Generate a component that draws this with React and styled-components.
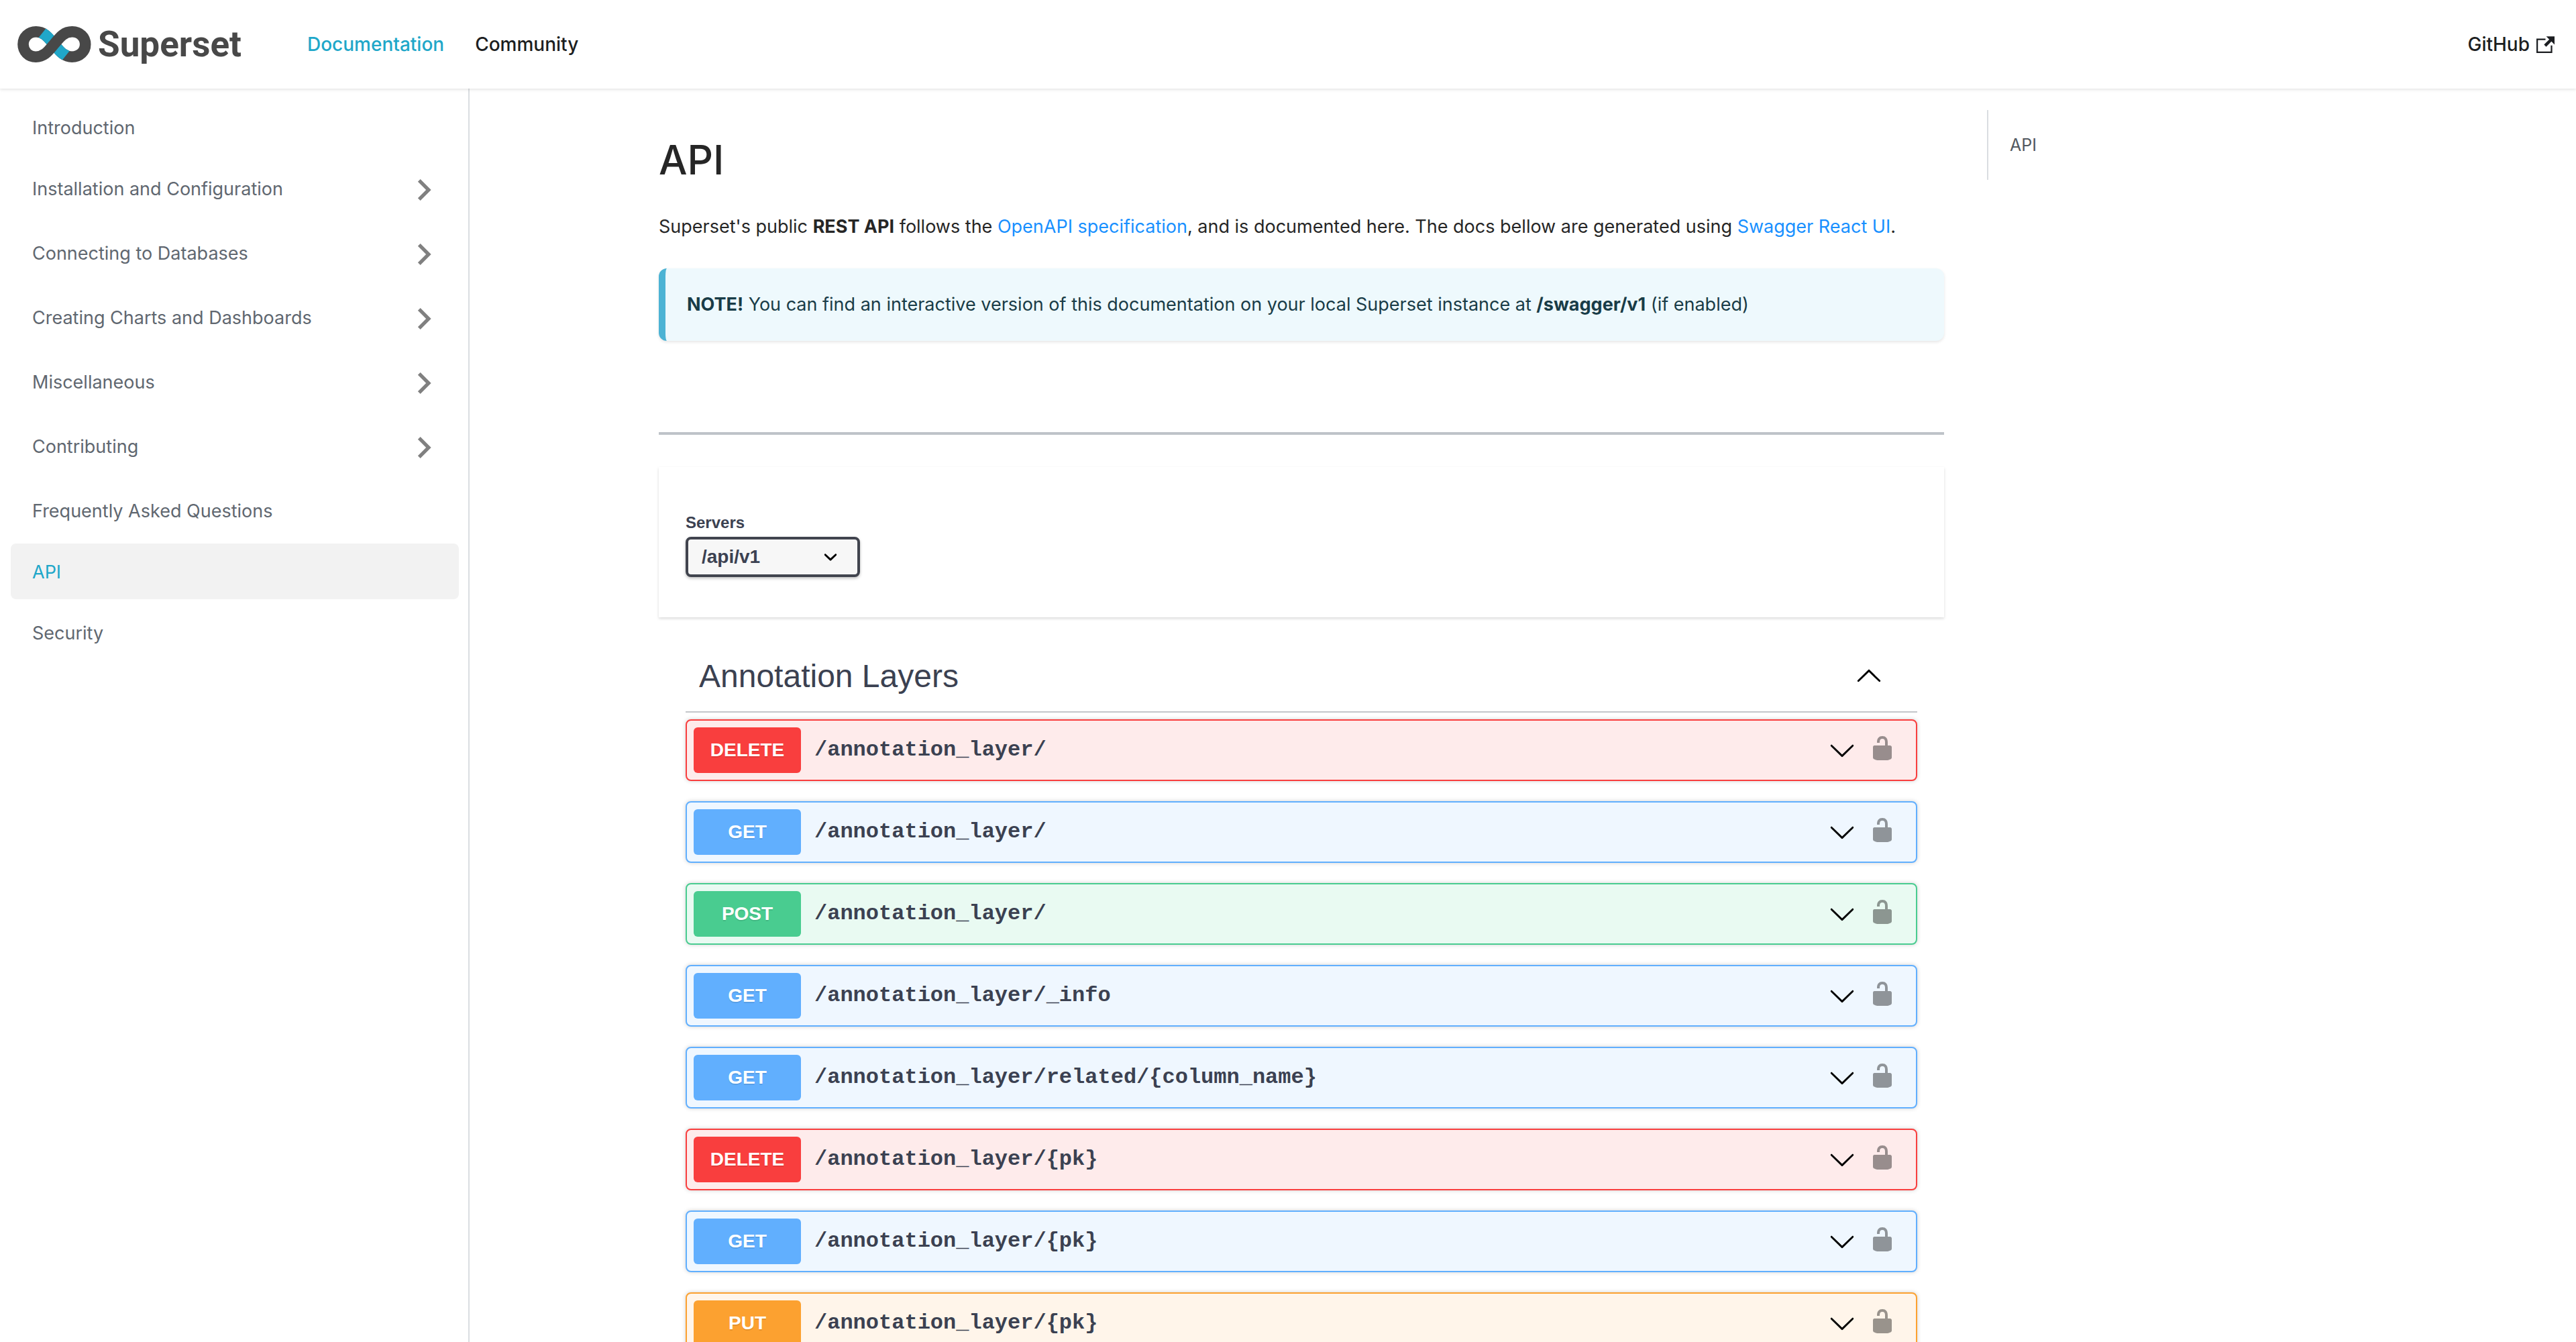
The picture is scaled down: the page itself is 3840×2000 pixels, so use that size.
import React, { useState } from "react";
import styled, { createGlobalStyle } from "styled-components";

const colors = {
  primary: "#20a7c9",
  ink: "#1c1e21",
  muted: "#606770",
  line: "#dadde1",
  swagger: "#3b4151",
};

const swaggerFont = `"Liberation Sans", Arial, sans-serif`;

const methods = {
  DELETE: { solid: "#f93e3e", tint: "#feebeb" },
  GET: { solid: "#61affe", tint: "#eff7ff" },
  POST: { solid: "#49cc90", tint: "#e9faf2" },
  PUT: { solid: "#fca130", tint: "#fff5ea" },
};

const sidebarItems = [
  { label: "Introduction" },
  { label: "Installation and Configuration", category: true },
  { label: "Connecting to Databases", category: true },
  { label: "Creating Charts and Dashboards", category: true },
  { label: "Miscellaneous", category: true },
  { label: "Contributing", category: true },
  { label: "Frequently Asked Questions" },
  { label: "API", active: true },
  { label: "Security" },
];

const operations = [
  { method: "DELETE", path: "/annotation_layer/" },
  { method: "GET", path: "/annotation_layer/" },
  { method: "POST", path: "/annotation_layer/" },
  { method: "GET", path: "/annotation_layer/_info" },
  { method: "GET", path: "/annotation_layer/related/{column_name}" },
  { method: "DELETE", path: "/annotation_layer/{pk}" },
  { method: "GET", path: "/annotation_layer/{pk}" },
  { method: "PUT", path: "/annotation_layer/{pk}" },
];

const GlobalStyle = createGlobalStyle`
  *, *::before, *::after { box-sizing: border-box; }
  body {
    margin: 0;
    background: #fff;
    color: #262626;
    font-family: Inter, "Liberation Sans", sans-serif;
    font-size: 27px;
  }
  a { color: inherit; text-decoration: none; }
  button { font: inherit; color: inherit; background: none; border: 0; padding: 0; cursor: pointer; }
  svg { display: block; flex: none; }
`;

const Shell = styled.div`
  display: flex;
  flex-direction: column;
  height: 100vh;
`;

const Navbar = styled.header`
  display: flex;
  align-items: center;
  flex: none;
  height: 132px;
  padding: 0 32px 0 26px;
  background: #fff;
  box-shadow: 0 2px 4px rgba(0, 0, 0, 0.1);
  position: relative;
  z-index: 1;
  color: ${colors.ink};
  font-size: 28px;
  font-weight: 500;
`;

const Brand = styled.a`
  display: flex;
  align-items: center;
  gap: 10px;
  margin-right: 98px;
  color: #484848;
  font: 700 53px/60px Roboto, sans-serif;
`;

const NavLinks = styled.nav`
  display: flex;
  flex: 1;
  gap: 46px;
`;

const NavLink = styled.a`
  display: flex;
  align-items: center;
  gap: 10px;
  line-height: 36px;
  color: ${(p) => (p.$active ? colors.primary : "inherit")};
`;

const Body = styled.div`
  display: flex;
  flex: 1;
  min-height: 0;
`;

const Sidebar = styled.nav`
  flex: none;
  width: 700px;
  padding: 16px 14px 16px 16px;
  border-right: 2px solid ${colors.line};
`;

const Menu = styled.ul`
  display: flex;
  flex-direction: column;
  gap: 8px;
  margin: 0;
  padding: 0;
  list-style: none;
`;

const MenuRow = styled.li`
  display: flex;
  border-radius: 8px;
  background: ${(p) => (p.$active ? "#f2f2f2" : "transparent")};
  color: ${(p) => (p.$active ? colors.primary : colors.muted)};
`;

const MenuLink = styled.a`
  flex: 1;
  padding: 25px 32px 23px;
  line-height: 35px;
`;

const MenuToggle = styled.button`
  display: flex;
  align-items: center;
  justify-content: center;
  width: 104px;
  height: 88px;
  color: #808080;
`;

const Content = styled.main`
  flex: 1;
  overflow: auto;
  scrollbar-width: none;
`;

const Columns = styled.div`
  display: grid;
  grid-template-columns: minmax(0, 3fr) minmax(0, 1fr);
  max-width: 2640px;
  margin: 0 auto;
  padding-top: 32px;
`;

const Article = styled.article`
  padding: 0 32px 32px;
`;

const Title = styled.h1`
  margin: 32px 0 34px;
  font-size: 60px;
  font-weight: 500;
  line-height: 84px;
`;

const Text = styled.p`
  margin: 0;
  line-height: 48px;
`;

const Intro = styled(Text)`
  margin-bottom: 38px;
`;

const TextLink = styled.a`
  color: #1890ff;
`;

const Note = styled.aside`
  padding: 30px 32px;
  border-left: 10px solid #4cb3d4;
  border-radius: 12px;
  background: #eef9fd;
  color: #193c47;
  box-shadow: 0 2px 4px rgba(0, 0, 0, 0.1);
`;

const Divider = styled.hr`
  height: 4px;
  margin: 136px 0 48px;
  border: 0;
  background: #bec3c9;
`;

const ServerPanel = styled.section`
  display: flex;
  flex-direction: column;
  align-items: flex-start;
  gap: 6px;
  padding: 68px 40px 60px;
  box-shadow: 0 2px 4px rgba(0, 0, 0, 0.15);
  color: ${colors.swagger};
  font-family: ${swaggerFont};
  font-weight: 700;
`;

const ServerLabel = styled.label`
  font-size: 24px;
  line-height: 30px;
`;

const SelectBox = styled.div`
  display: grid;
  align-items: center;

  > * {
    grid-area: 1 / 1;
  }

  > svg {
    justify-self: end;
    margin-right: 24px;
    pointer-events: none;
  }
`;

const Select = styled.select`
  appearance: none;
  width: 260px;
  height: 60px;
  padding: 0 80px 0 20px;
  border: 4px solid #41444e;
  border-radius: 8px;
  background: #f7f7f7;
  box-shadow: 0 2px 4px rgba(0, 0, 0, 0.25);
  color: inherit;
  font: 700 28px/32px ${swaggerFont};
`;

const TagSection = styled.section`
  padding: 36px 40px 0;
  color: ${colors.swagger};
`;

const TagHeader = styled.div`
  display: flex;
  align-items: center;
  justify-content: space-between;
  height: 106px;
  padding: 0 52px 0 20px;
  border-bottom: 2px solid rgba(59, 65, 81, 0.3);
`;

const TagTitle = styled.h3`
  margin: 0;
  font: 400 48px/56px ${swaggerFont};
`;

const LockButton = styled.button`
  padding-bottom: 6px;
  color: rgba(0, 0, 0, 0.4);
`;

const Operations = styled.div`
  display: flex;
  flex-direction: column;
  gap: 30px;
  padding-top: 10px;
`;

const Operation = styled.div`
  display: flex;
  align-items: center;
  gap: 20px;
  padding: 10px 30px 10px 10px;
  border: 2px solid ${(p) => methods[p.$method].solid};
  border-radius: 8px;
  background: ${(p) => methods[p.$method].tint};
  box-shadow: 0 0 6px rgba(0, 0, 0, 0.19);
`;

const OperationToggle = styled.button`
  display: flex;
  align-items: center;
  flex: 1;
  gap: 20px;
`;

const Method = styled.span`
  width: 160px;
  border-radius: 6px;
  background: ${(p) => methods[p.$method].solid};
  color: #fff;
  font: 700 28px/68px ${swaggerFont};
  text-align: center;
  text-shadow: 0 2px 0 rgba(0, 0, 0, 0.1);
`;

const Path = styled.span`
  flex: 1;
  font: 700 32px/40px "Liberation Mono", monospace;
  text-align: left;
`;

const Toc = styled.aside`
  padding: 0 32px;
`;

const TocList = styled.ul`
  margin: 0;
  padding: 32px;
  border-left: 2px solid ${colors.line};
  color: #525860;
  font-size: 25px;
  line-height: 40px;
  list-style: none;
`;

const LogoMark = () => (
  <svg width="110" height="54" viewBox="0 0 110 54" fill="none" strokeWidth="16.6" aria-hidden="true">
    <defs>
      <clipPath id="band">
        <path d="M45.2 0L26 24L40 54H64L83.2 30L69 0Z" />
      </clipPath>
    </defs>
    <path stroke="#484848" d="M27.5 8.3C40.5 8.3 46.5 17.5 54.5 27S68.5 45.7 81.5 45.7" />
    <path stroke="#20a7c9" clipPath="url(#band)" d="M27.5 8.3C40.5 8.3 46.5 17.5 54.5 27S68.5 45.7 81.5 45.7" />
    <path
      stroke="#484848"
      d="M28 8.3C16.5 8.3 8.5 16.5 8.5 27S16.5 45.7 27.5 45.7C40.5 45.7 46.5 36.5 54.5 27S68.5 8.3 81.5 8.3C93 8.3 101.2 16.5 101.2 27S93 45.7 81 45.7"
    />
  </svg>
);

const ExternalIcon = () => (
  <svg width="27" height="27" viewBox="0 0 24 24" fill="currentColor" aria-hidden="true">
    <path d="M21 13v10h-21v-19h12v2h-10v15h17v-8h2zm3-12h-10.988l4.035 4-6.977 7.07 2.828 2.828 6.977-7.07 4.125 4.172v-11z" />
  </svg>
);

const CaretRight = () => (
  <svg width="64" height="64" viewBox="0 0 24 24" fill="currentColor" aria-hidden="true">
    <path d="M8.59 16.59L13.17 12 8.59 7.41 10 6l6 6-6 6z" />
  </svg>
);

const ArrowDown = ({ flip }) => (
  <svg width="40" height="40" viewBox="0 0 20 20" fill="#000" aria-hidden="true">
    <path
      transform={flip ? "rotate(180 10 10)" : undefined}
      d="M17.418 6.109c.272-.268.709-.268.979 0s.271.701 0 .969l-7.908 7.83c-.27.268-.707.268-.979 0l-7.908-7.83c-.27-.268-.27-.701 0-.969.271-.268.709-.268.979 0L10 13.25l7.418-7.141z"
    />
  </svg>
);

const SelectArrow = () => (
  <svg width="40" height="40" viewBox="0 0 20 20" fill="#000" aria-hidden="true">
    <path d="M13.418 7.859c.271-.268.709-.268.978 0 .27.268.272.701 0 .969l-3.908 3.83c-.27.268-.707.268-.979 0l-3.908-3.83c-.27-.267-.27-.701 0-.969.271-.268.709-.268.978 0L10 11l3.418-3.141z" />
  </svg>
);

const Unlocked = () => (
  <svg width="40" height="40" viewBox="0 0 20 20" fill="currentColor" aria-hidden="true">
    <path d="M15.8 8H14V5.6C14 2.703 12.665 1 10 1 7.334 1 6 2.703 6 5.6V6h2v-.801C8 3.754 8.797 3 10 3c1.203 0 2 .754 2 2.199V8H4c-.553 0-1 .646-1 1.199V17c0 .549.428 1.139.951 1.307l1.197.387C5.672 18.861 6.55 19 7.1 19h5.8c.549 0 1.428-.139 1.951-.307l1.196-.387c.524-.167.953-.757.953-1.306V9.199C17 8.646 16.352 8 15.8 8z" />
  </svg>
);

export default function App() {
  const [open, setOpen] = useState(true);

  return (
    <>
      <GlobalStyle />
      <Shell>
        <Navbar>
          <Brand href="#home">
            <LogoMark />
            Superset
          </Brand>
          <NavLinks aria-label="Main">
            <NavLink href="#docs" $active>Documentation</NavLink>
            <NavLink href="#community">Community</NavLink>
          </NavLinks>
          <NavLink href="#github">
            GitHub
            <ExternalIcon />
          </NavLink>
        </Navbar>
        <Body>
          <Sidebar aria-label="Docs">
            <Menu>
              {sidebarItems.map(({ label, category, active }) => (
                <MenuRow key={label} $active={active}>
                  <MenuLink href="#docs" aria-current={active ? "page" : undefined}>{label}</MenuLink>
                  {category && (
                    <MenuToggle type="button" aria-label={`Expand ${label}`}>
                      <CaretRight />
                    </MenuToggle>
                  )}
                </MenuRow>
              ))}
            </Menu>
          </Sidebar>
          <Content>
            <Columns>
              <Article>
                <Title id="api">API</Title>
                <Intro>
                  Superset's public <strong>REST API</strong> follows the{" "}
                  <TextLink href="#openapi">OpenAPI specification</TextLink>, and is documented here. The docs bellow
                  are generated using <TextLink href="#swagger">Swagger React UI</TextLink>.
                </Intro>
                <Note>
                  <Text>
                    <strong>NOTE!</strong> You can find an interactive version of this documentation on your local
                    Superset instance at <strong>/swagger/v1</strong> (if enabled)
                  </Text>
                </Note>
                <Divider />
                <ServerPanel>
                  <ServerLabel htmlFor="servers">Servers</ServerLabel>
                  <SelectBox>
                    <Select id="servers" defaultValue="/api/v1">
                      <option value="/api/v1">/api/v1</option>
                    </Select>
                    <SelectArrow />
                  </SelectBox>
                </ServerPanel>
                <TagSection>
                  <TagHeader>
                    <TagTitle>Annotation Layers</TagTitle>
                    <button
                      type="button"
                      aria-label="Toggle Annotation Layers"
                      aria-expanded={open}
                      onClick={() => setOpen(!open)}
                    >
                      <ArrowDown flip={open} />
                    </button>
                  </TagHeader>
                  {open && (
                    <Operations>
                      {operations.map(({ method, path }) => (
                        <Operation key={method + path} $method={method}>
                          <OperationToggle type="button">
                            <Method $method={method}>{method}</Method>
                            <Path>{path}</Path>
                            <ArrowDown />
                          </OperationToggle>
                          <LockButton type="button" aria-label="Authorize">
                            <Unlocked />
                          </LockButton>
                        </Operation>
                      ))}
                    </Operations>
                  )}
                </TagSection>
              </Article>
              <Toc>
                <TocList>
                  <li>
                    <a href="#api">API</a>
                  </li>
                </TocList>
              </Toc>
            </Columns>
          </Content>
        </Body>
      </Shell>
    </>
  );
}
